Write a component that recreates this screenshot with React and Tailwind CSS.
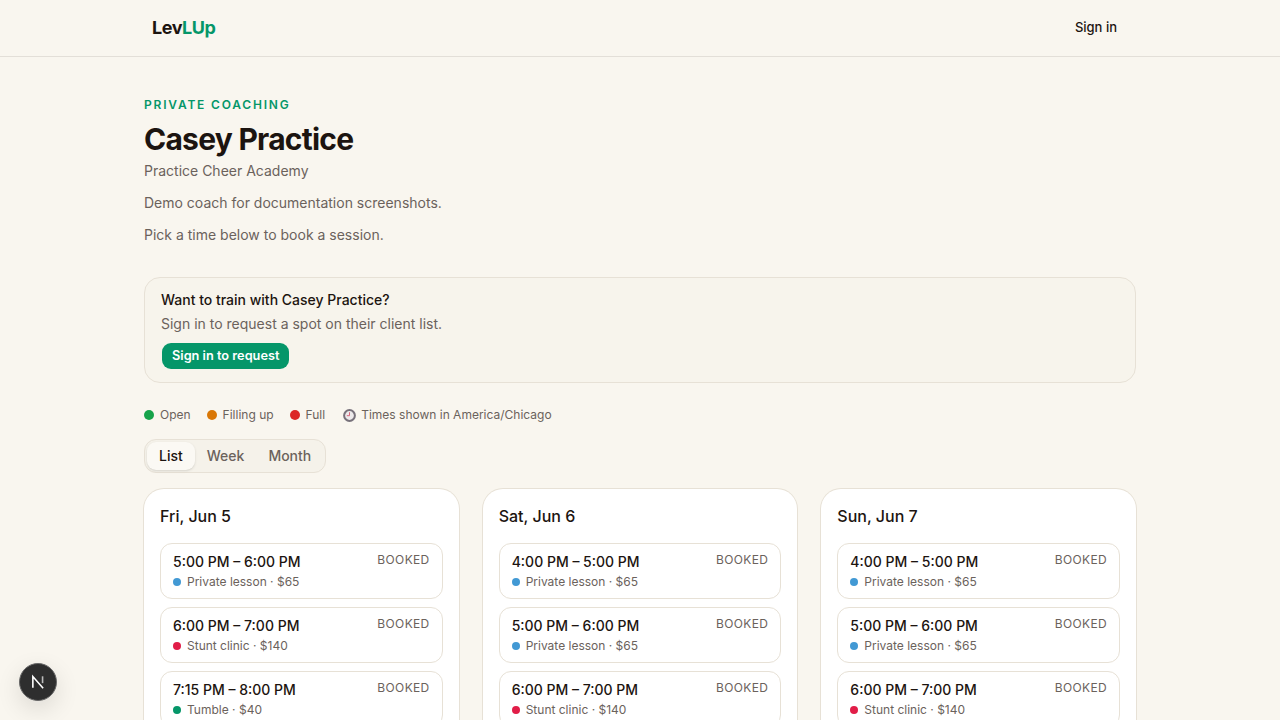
const days = [
  {
    label: "Fri, Jun 5",
    slots: [
      { time: "5:00 PM – 6:00 PM", name: "Private lesson · $65", dot: "bg-[#4299d4]" },
      { time: "6:00 PM – 7:00 PM", name: "Stunt clinic · $140", dot: "bg-[#e11d48]" },
      { time: "7:15 PM – 8:00 PM", name: "Tumble · $40", dot: "bg-[#059669]" },
    ],
  },
  {
    label: "Sat, Jun 6",
    slots: [
      { time: "4:00 PM – 5:00 PM", name: "Private lesson · $65", dot: "bg-[#4299d4]" },
      { time: "5:00 PM – 6:00 PM", name: "Private lesson · $65", dot: "bg-[#4299d4]" },
      { time: "6:00 PM – 7:00 PM", name: "Stunt clinic · $140", dot: "bg-[#e11d48]" },
    ],
  },
  {
    label: "Sun, Jun 7",
    slots: [
      { time: "4:00 PM – 5:00 PM", name: "Private lesson · $65", dot: "bg-[#4299d4]" },
      { time: "5:00 PM – 6:00 PM", name: "Private lesson · $65", dot: "bg-[#4299d4]" },
      { time: "6:00 PM – 7:00 PM", name: "Stunt clinic · $140", dot: "bg-[#e11d48]" },
    ],
  },
];

function Slot({ slot }) {
  return (
    <div className="flex h-14 justify-between rounded-xl border border-[#e7e1d6] bg-white px-3 pt-2">
      <div>
        <div className="text-sm leading-5 font-medium text-[#1c1410]">{slot.time}</div>
        <div className="flex items-center gap-1.5 text-xs leading-5 text-[#6b625c]">
          <span className={`h-2 w-2 rounded-full ${slot.dot}`}></span>
          {slot.name}
        </div>
      </div>
      <div className="text-xs leading-4 tracking-[0.03em] text-[#6b625c]">BOOKED</div>
    </div>
  );
}

function DayCard({ day }) {
  return (
    <div className="rounded-[20px] bg-white px-4 pt-[15px] pb-4 ring-1 ring-[#e7e1d6]">
      <h3 className="text-base leading-6 font-medium text-[#1c1410]">{day.label}</h3>
      <div className="mt-[15px] flex flex-col gap-2">
        {day.slots.map((slot) => (
          <Slot key={slot.time} slot={slot} />
        ))}
      </div>
    </div>
  );
}

export default function App() {
  return (
    <div className="min-h-screen bg-[#f9f6ef] font-['Inter',sans-serif]">
      {/* HEADER */}
      <header className="h-[57px] border-b border-[#e3dfd8]">
        <div className="mx-auto flex h-14 max-w-5xl items-center justify-between pr-[35px] pl-6">
          <div className="text-lg font-bold tracking-tight text-[#1c1410]">
            Lev<span className="text-[#059669]">LUp</span>
          </div>
          <a className="text-[13px] font-medium text-[#1c1410]">Sign in</a>
        </div>
      </header>

      <main className="mx-auto max-w-[992px] pt-10">
        {/* COACH INFO */}
        <p className="text-xs leading-4 font-semibold tracking-[0.15em] text-[#059669]">PRIVATE COACHING</p>
        <h1 className="mt-2 text-3xl leading-9 font-bold tracking-tight text-[#1c1410]">Casey Practice</h1>
        <p className="mt-[3px] text-sm leading-[22px] text-[#6b625c]">Practice Cheer Academy</p>
        <p className="mt-2.5 text-sm leading-[22px] text-[#6b625c]">Demo coach for documentation screenshots.</p>
        <p className="mt-2.5 text-sm leading-[22px] text-[#6b625c]">Pick a time below to book a session.</p>

        {/* REQUEST BOX */}
        <div className="mt-[31px] h-[106px] rounded-2xl border border-[#e7e1d6] bg-[#f7f4ec] px-4 pt-2.5">
          <h2 className="text-sm leading-6 font-medium text-[#1c1410]">Want to train with Casey Practice?</h2>
          <p className="text-sm leading-6 text-[#6b625c]">Sign in to request a spot on their client list.</p>
          <button className="mt-[7px] ml-px h-[26px] rounded-[9px] bg-[#059669] px-2.5 text-[12.75px] font-semibold text-white">
            Sign in to request
          </button>
        </div>

        {/* LEGEND */}
        <div className="mt-[23px] flex h-[18px] items-center gap-4 text-xs text-[#6b625c]">
          <div className="flex items-center gap-1.5">
            <span className="h-2.5 w-2.5 rounded-full bg-[#16a34a]"></span>
            Open
          </div>
          <div className="flex items-center gap-1.5">
            <span className="h-2.5 w-2.5 rounded-full bg-[#d97706]"></span>
            Filling up
          </div>
          <div className="flex items-center gap-1.5">
            <span className="h-2.5 w-2.5 rounded-full bg-[#dc2626]"></span>
            Full
          </div>
          <div className="ml-0.5 flex items-center gap-[5px]">
            <svg width="13" height="13" viewBox="0 0 13 13">
              <circle cx="6.5" cy="6.5" r="5.4" fill="#ece9ea" stroke="#77717a" strokeWidth="2" />
              <path d="M6.5 3.2V6.7H3.8" fill="none" stroke="#d9667c" strokeWidth="1" />
            </svg>
            Times shown in America/Chicago
          </div>
        </div>

        {/* VIEW TABS */}
        <div className="mt-[15px] inline-flex h-[34px] items-center rounded-xl border border-[#e7e1d6] bg-[#f5f2ea] px-0.5 text-sm font-medium">
          <button className="h-[28px] rounded-[9px] bg-[#fbf9f4] px-3 text-[#1c1410] shadow-sm">List</button>
          <button className="h-[28px] px-3 text-[#6b625c]">Week</button>
          <button className="h-[28px] px-3 text-[#6b625c]">Month</button>
        </div>

        {/* SCHEDULE */}
        <div className="mt-4 grid grid-cols-3 gap-6">
          {days.map((day) => (
            <DayCard key={day.label} day={day} />
          ))}
        </div>
      </main>

      {/* DEV BADGE */}
      <div className="fixed bottom-[19px] left-[19px] flex h-[38px] w-[38px] items-center justify-center rounded-full border border-[#666] bg-[#2e2e2e] shadow-[0_8px_24px_rgba(0,0,0,0.12)]">
        <svg width="16" height="16" viewBox="0 0 14 14" fill="none">
          <path d="M2.5 12V2.2L11.5 12.5" stroke="#fff" strokeWidth="1.4" />
          <path d="M11 2V8" stroke="#bbb" strokeWidth="1.4" />
        </svg>
      </div>
    </div>
  );
}
